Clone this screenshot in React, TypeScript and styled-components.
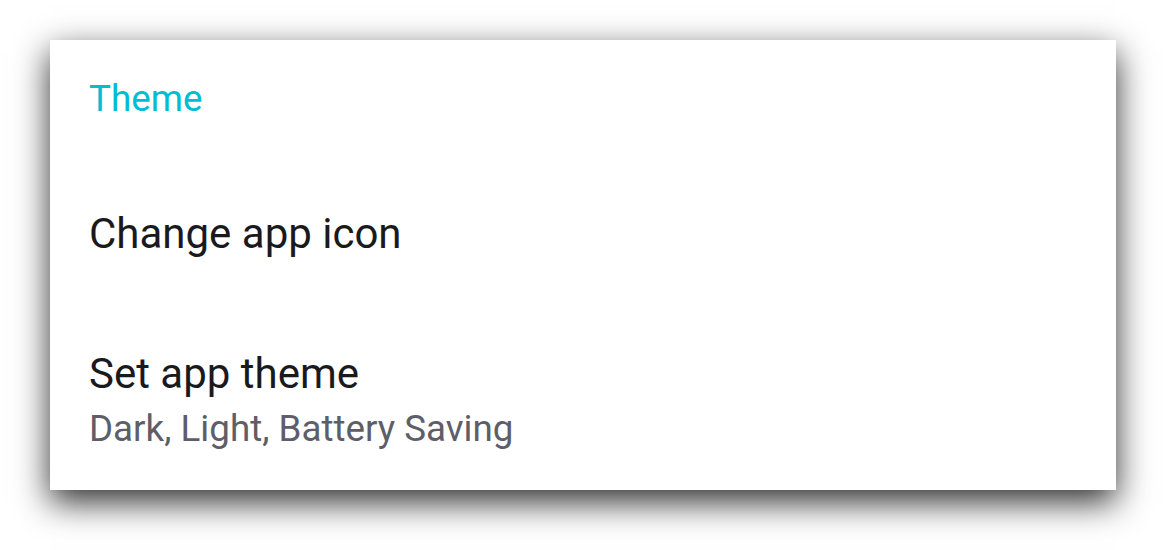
import React from "react";
import styled, { createGlobalStyle } from "styled-components";

const GlobalStyle = createGlobalStyle`
  html, body {
    margin: 0;
    padding: 0;
    background: #ffffff;
  }
  body {
    font-family: Roboto, "Noto Sans", "Liberation Sans", sans-serif;
  }
`;

const Page = styled.div`
  width: 1167px;
  height: 550px;
  padding: 40px 0 0 50px;
  box-sizing: border-box;
`;

const Card = styled.section`
  width: 1066px;
  height: 450px;
  background: #ffffff;
  box-shadow: 0 12px 32px rgba(0, 0, 0, 0.82);
  box-sizing: border-box;
  padding: 37px 40px 0 39px;
  display: flex;
  flex-direction: column;
`;

const Category = styled.h2`
  margin: 0;
  font-family: Roboto, sans-serif;
  font-weight: 400;
  font-size: 36.75px;
  line-height: 44px;
  color: #00bcd4;
`;

const Row = styled.div<{ $top: number; $bottom: number }>`
  display: flex;
  flex-direction: column;
  gap: 8px;
  padding-top: ${(p) => p.$top}px;
  padding-bottom: ${(p) => p.$bottom}px;
`;

const Title = styled.div`
  font-family: Roboto, sans-serif;
  font-size: 42px;
  line-height: 50px;
  color: #1a1a1e;
`;

const Summary = styled.div`
  font-family: Roboto, sans-serif;
  font-size: 36.75px;
  line-height: 44px;
  color: #5e5e69;
`;

export default function App() {
  return (
    <>
      <GlobalStyle />
      <Page>
        <Card>
          <Category>Theme</Category>
          <Row $top={88} $bottom={45}>
            <Title>Change app icon</Title>
          </Row>
          <Row $top={45} $bottom={40}>
            <Title>Set app theme</Title>
            <Summary>Dark, Light, Battery Saving</Summary>
          </Row>
        </Card>
      </Page>
    </>
  );
}
